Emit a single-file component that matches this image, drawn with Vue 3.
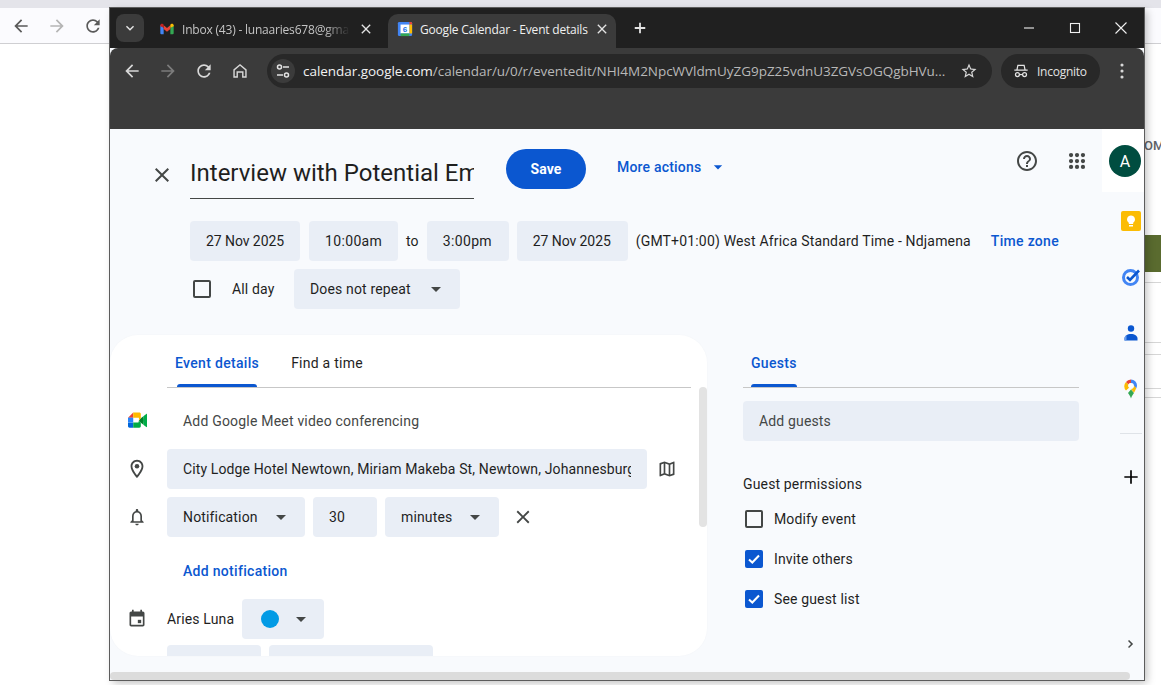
<script setup>
const toolIcons = {
  back: 'M20 11H7.830l5.590-5.590L12 4l-8 8 8 8 1.410-1.410L7.830 13H20v-2z',
  forward: 'M12 4l-1.410 1.410L16.170 11H4v2h12.170l-5.580 5.590L12 20l8-8z',
  refresh: 'M17.650 6.350C16.200 4.900 14.210 4 12 4c-4.420 0-7.990 3.580-7.990 8s3.570 8 7.990 8c3.730 0 6.840-2.550 7.730-6h-2.080c-.820 2.330-3.040 4-5.650 4-3.310 0-6-2.690-6-6s2.690-6 6-6c1.660 0 3.140.690 4.220 1.780L13 11h7V4l-2.350 2.350z',
  close: 'M19 6.410L17.590 5 12 10.590 6.410 5 5 6.410 10.590 12 5 17.590 6.410 19 12 13.410 17.590 19 19 17.590 13.410 12z',
  caret: 'M7 10l5 5 5-5z'
}
const permissions = [
  { label: 'Modify event', on: false },
  { label: 'Invite others', on: true },
  { label: 'See guest list', on: true }
]
const backLines = [47, 59, 11, 33, 8]
</script>

<template>
  <div class="desktop">
    <div class="back-top"></div>
    <div class="back-bar">
      <svg class="back-ico" viewBox="0 0 24 24"><path :d="toolIcons.back" /></svg>
      <svg class="back-ico dim" viewBox="0 0 24 24"><path :d="toolIcons.forward" /></svg>
      <svg class="back-ico" viewBox="0 0 24 24"><path :d="toolIcons.refresh" /></svg>
    </div>
    <div class="back-strip">
      <div class="back-om">OM</div>
      <div class="back-olive"></div>
      <div v-for="(m, i) in backLines" :key="i" class="back-line" :style="{ marginTop: m + 'px' }"></div>
    </div>

    <div class="window">
      <div class="tabstrip">
        <div class="tab-search">
          <svg viewBox="0 0 24 24" width="16" height="16"><path d="M7.400 8.600L12 13.200l4.600-4.600L18 10l-6 6-6-6z" fill="#e8e8e8" /></svg>
        </div>
        <div class="tab">
          <svg class="favicon" viewBox="0 0 24 24">
            <path d="M2 20V6l5 4v10H3.500A1.500 1.500 0 0 1 2 18.500z" fill="#4285f4" />
            <path d="M22 20V6l-5 4v10h3.500A1.500 1.500 0 0 0 22 18.500z" fill="#34a853" />
            <path d="M7 12V6.500L12 10.500l5-4V12l-5 4z" fill="#ea4335" />
            <path d="M2 8V6.500C2 4.500 4.300 3.400 5.900 4.600L7 5.500V10z" fill="#c5221f" />
            <path d="M22 8V6.500c0-2-2.300-3.100-3.900-1.900L17 5.500V10z" fill="#fbbc04" />
          </svg>
          <span class="tab-title fade">Inbox (43) - lunaaries678@gmail.com</span>
          <svg class="tab-x" viewBox="0 0 24 24"><path :d="toolIcons.close" /></svg>
        </div>
        <div class="tab active">
          <svg class="favicon" viewBox="0 0 18 18">
            <rect x="1" y="1" width="16" height="16" rx="1.500" fill="#4285f4" />
            <rect x="4" y="4" width="10" height="10" fill="#fff" />
            <path d="M14 1h1.500A1.500 1.500 0 0 1 17 2.500V4h-3z" fill="#ea4335" />
            <rect x="14" y="4" width="3" height="10" fill="#fbbc04" />
            <rect x="4" y="14" width="10" height="3" fill="#34a853" />
            <text x="9" y="12.300" text-anchor="middle" class="cal-num">6</text>
          </svg>
          <span class="tab-title on">Google Calendar - Event details</span>
          <svg class="tab-x" viewBox="0 0 24 24"><path :d="toolIcons.close" /></svg>
        </div>
        <svg class="new-tab" viewBox="0 0 24 24"><path d="M19 13.200h-5.800V19h-2.400v-5.800H5v-2.400h5.800V5h2.400v5.800H19z" /></svg>
        <div class="win-controls">
          <svg viewBox="0 0 14 14"><path d="M2 7h10" /></svg>
          <svg viewBox="0 0 14 14"><rect x="2.500" y="2.500" width="9" height="9" /></svg>
          <svg viewBox="0 0 14 14"><path d="M1.500 1.500l11 11M12.500 1.500l-11 11" /></svg>
        </div>
      </div>

      <div class="toolbar">
        <div class="nav">
          <svg class="nav-ico" viewBox="0 0 24 24"><path :d="toolIcons.back" /></svg>
          <svg class="nav-ico dim" viewBox="0 0 24 24"><path :d="toolIcons.forward" /></svg>
          <svg class="nav-ico" viewBox="0 0 24 24"><path :d="toolIcons.refresh" /></svg>
          <svg class="nav-ico" viewBox="0 0 24 24"><path d="M12 3.500L4 10.300V20h5.500v-6h5v6H20v-9.700zM18.300 18.300h-2.100v-6H7.800v6H5.700v-7.200L12 5.700l6.300 5.400z" /></svg>
        </div>
        <div class="omnibox">
          <div class="tune">
            <svg viewBox="0 0 16 16" width="16" height="16" fill="none" stroke="#e3e3e3" stroke-width="1.500">
              <circle cx="4.500" cy="4" r="2" /><path d="M8 4h6M2 12h6" /><circle cx="11.500" cy="12" r="2" />
            </svg>
          </div>
          <span class="url"><b>calendar.google.com</b>/calendar/u/0/r/eventedit/NHI4M2NpcWVldmUyZG9pZ25vdnU3ZGVsOGQgbHVu...</span>
          <svg class="star" viewBox="0 0 24 24"><path d="M22 9.240l-7.190-.620L12 2 9.190 8.630 2 9.240l5.460 4.730L5.820 21 12 17.270 18.180 21l-1.630-7.030L22 9.240zM12 15.400l-3.760 2.270 1-4.280-3.320-2.880 4.380-.380L12 6.100l1.710 4.040 4.380.380-3.320 2.880 1 4.280L12 15.400z" /></svg>
        </div>
        <div class="incognito">
          <svg viewBox="0 0 18 18" width="16" height="16" fill="none" stroke="#e3e3e3" stroke-width="1.400">
            <path d="M4.500 7.500L5.500 2.800h7l1 4.700M1.500 8h15" /><circle cx="5" cy="13" r="2.200" /><circle cx="13" cy="13" r="2.200" /><path d="M7.200 13h3.600" />
          </svg>
          <span>Incognito</span>
        </div>
        <svg class="more" viewBox="0 0 24 24"><circle cx="12" cy="5.500" r="1.700" /><circle cx="12" cy="12" r="1.700" /><circle cx="12" cy="18.500" r="1.700" /></svg>
      </div>

      <div class="main">
        <div class="page">
          <div class="head">
            <svg class="ico head-x" viewBox="0 0 24 24"><path :d="toolIcons.close" /></svg>
            <input class="title" value="Interview with Potential Employer" readonly />
            <div class="save">Save</div>
            <div class="more-actions">More actions
              <svg viewBox="0 0 24 24" width="20" height="20"><path :d="toolIcons.caret" fill="#0b57d0" /></svg>
            </div>
            <svg class="ico help" viewBox="0 0 24 24"><path d="M11 18h2v-2h-2v2zm1-16C6.480 2 2 6.480 2 12s4.480 10 10 10 10-4.480 10-10S17.520 2 12 2zm0 18c-4.410 0-8-3.590-8-8s3.590-8 8-8 8 3.590 8 8-3.590 8-8 8zm0-14c-2.210 0-4 1.790-4 4h2c0-1.100.9-2 2-2s2 .9 2 2c0 2-3 1.750-3 5h2c0-2.250 3-2.500 3-5 0-2.210-1.790-4-4-4z" /></svg>
            <svg class="ico apps" viewBox="0 0 24 24">
              <template v-for="y in [5, 12, 19]" :key="y">
                <circle v-for="x in [5, 12, 19]" :key="x" :cx="x" :cy="y" r="2.500" />
              </template>
            </svg>
          </div>

          <div class="dates">
            <div class="chip d">27 Nov 2025</div>
            <div class="chip t t1">10:00am</div>
            <span class="to">to</span>
            <div class="chip t t2">3:00pm</div>
            <div class="chip d d2">27 Nov 2025</div>
            <span class="tz">(GMT+01:00) West Africa Standard Time - Ndjamena</span>
            <span class="link tz-link">Time zone</span>
          </div>

          <div class="repeat">
            <span class="box"></span>
            <span class="allday">All day</span>
            <div class="chip drop rep">Does not repeat
              <svg class="caret" viewBox="0 0 24 24"><path :d="toolIcons.caret" /></svg>
            </div>
          </div>

          <div class="cols">
            <div class="card">
              <div class="tabs">
                <div class="gtab cur">Event details</div>
                <div class="gtab">Find a time</div>
              </div>
              <div class="rows">
                <div class="row">
                  <svg class="row-ico meet" viewBox="0 0 20 20">
                    <path d="M11.500 10l2 2.300 2.700 2.200.5-4.500-.5-4.500-2.700 2.200z" fill="#00832d" />
                    <path d="M0 14v4c0 .8.700 1.500 1.500 1.500H5.500V14z" fill="#0066da" transform="translate(0 -2)" />
                    <path d="M5.500 1.500L0 7h5.500z" fill="#e94235" />
                    <rect x="0" y="7" width="5.500" height="5" fill="#2684fc" />
                    <path d="M5.500 12v5.500h6.500c.8 0 1.500-.7 1.500-1.500v-3.700l-2-2.300-.5 2z" fill="#00ac47" />
                    <path d="M13.500 3c0-.8-.7-1.500-1.500-1.500H5.500V7h6v3l2-2.500z" fill="#ffba00" />
                    <path d="M16.200 5.500l3-2.400c.3-.2.800 0 .8.400v13c0 .4-.5.600-.8.400l-3-2.400z" fill="#00ac47" />
                  </svg>
                  <span class="meet-text">Add Google Meet video conferencing</span>
                </div>
                <div class="row">
                  <svg class="row-ico pin" viewBox="0 0 24 24"><path d="M12 2C8.130 2 5 5.130 5 9c0 5.250 7 13 7 13s7-7.750 7-13c0-3.870-3.130-7-7-7zM7 9c0-2.760 2.240-5 5-5s5 2.240 5 5c0 2.880-2.880 7.190-5 9.880C9.920 16.210 7 11.850 7 9z" /><circle cx="12" cy="9" r="2.500" /></svg>
                  <div class="chip loc"><input class="loc-input" value="City Lodge Hotel Newtown, Miriam Makeba St, Newtown, Johannesburg, South Africa" readonly /></div>
                  <svg class="map" viewBox="0 0 24 24"><path d="M20.500 3l-.160.030L15 5.100 9 3 3.360 4.900c-.210.070-.360.250-.360.480V20.500c0 .280.220.500.500.500l.160-.030L9 18.900l6 2.100 5.640-1.900c.210-.070.360-.250.360-.480V3.500c0-.280-.220-.500-.500-.500zM10 5.470l4 1.400v11.660l-4-1.400V5.470zm-5 .990l3-1.010v11.700l-3 1.160V6.460zm14 11.080l-3 1.010V6.860l3-1.160v11.840z" /></svg>
                </div>
                <div class="row">
                  <svg class="row-ico" viewBox="0 0 24 24"><path d="M12 22c1.100 0 2-.9 2-2h-4c0 1.100.9 2 2 2zm6-6v-5c0-3.070-1.630-5.640-4.500-6.320V4c0-.830-.670-1.500-1.500-1.500s-1.500.670-1.500 1.500v.680C7.640 5.360 6 7.920 6 11v5l-2 2v1h16v-1l-2-2zm-2 1H8v-6c0-2.480 1.510-4.500 4-4.500s4 2.020 4 4.500v6z" /></svg>
                  <div class="chip drop n1">Notification
                    <svg class="caret" viewBox="0 0 24 24"><path :d="toolIcons.caret" /></svg>
                  </div>
                  <div class="chip n2">30</div>
                  <div class="chip drop n3">minutes
                    <svg class="caret" viewBox="0 0 24 24"><path :d="toolIcons.caret" /></svg>
                  </div>
                  <svg class="ico n-x" viewBox="0 0 24 24"><path :d="toolIcons.close" /></svg>
                </div>
                <div class="row add-row"><span class="link">Add notification</span></div>
                <div class="row">
                  <svg class="row-ico" viewBox="0 0 24 24"><path d="M19 3h-1V1h-2v2H8V1H6v2H5c-1.110 0-2 .9-2 2v14c0 1.100.890 2 2 2h14c1.100 0 2-.9 2-2V5c0-1.100-.9-2-2-2zm0 16H5V9h14v10z" /><rect x="13" y="13" width="4" height="4" /></svg>
                  <span class="owner">Aries Luna</span>
                  <div class="chip color">
                    <span class="dot"></span>
                    <svg class="caret" viewBox="0 0 24 24"><path :d="toolIcons.caret" /></svg>
                  </div>
                </div>
                <div class="row next">
                  <div class="chip b1"></div>
                  <div class="chip b2"></div>
                </div>
              </div>
              <div class="vthumb"></div>
            </div>

            <div class="guests">
              <div class="tabs g">
                <div class="gtab cur g-cur">Guests</div>
              </div>
              <div class="chip add-guests">Add guests</div>
              <div class="perm-title">Guest permissions</div>
              <div v-for="p in permissions" :key="p.label" class="perm">
                <span v-if="p.on" class="box on">
                  <svg viewBox="0 0 18 18" width="18" height="18"><path d="M4 9.500l3.300 3L14 5.500" fill="none" stroke="#fff" stroke-width="2" /></svg>
                </span>
                <span v-else class="box"></span>
                <span>{{ p.label }}</span>
              </div>
            </div>
          </div>
        </div>

        <div class="side">
          <div class="side-top"><div class="avatar">A</div></div>
          <div class="rail">
            <svg class="rail-ico" viewBox="0 0 20 20">
              <rect width="20" height="20" rx="2" fill="#fbbc04" />
              <path d="M10 4.500a4 4 0 0 0-2.200 7.300V13h4.400v-1.200A4 4 0 0 0 10 4.500z" fill="#fff" />
              <rect x="8" y="14" width="4" height="1.500" fill="#fff" />
            </svg>
            <svg class="rail-ico" viewBox="0 0 20 20">
              <circle cx="9.500" cy="10.500" r="7" fill="none" stroke="#4285f4" stroke-width="3" />
              <path d="M6 10l3 3L18 3.500" fill="none" stroke="#0b57d0" stroke-width="2.600" />
            </svg>
            <svg class="rail-ico" viewBox="0 0 20 20">
              <circle cx="10" cy="5.500" r="3.200" fill="#0b57d0" />
              <path d="M3.500 17.500v-2C3.500 12.800 6.300 11 10 11s6.500 1.800 6.500 4.500v2z" fill="#0b57d0" />
              <path d="M3.500 17.500v-2C3.500 14 4.300 13 5.500 12.300v5.200z" fill="#6d9eeb" />
            </svg>
            <svg class="rail-ico" viewBox="0 0 20 20">
              <path d="M10 19.500c-.8-2.600-1.800-3.800-3-5.500L10 10.500l3 3.500c-1.200 1.700-2.200 2.900-3 5.500z" fill="#34a853" />
              <path d="M10 .5a6 6 0 0 1 6 6c0 1.100-.4 2.100-.9 3L13 7a3 3 0 0 0-3-3z" fill="#4285f4" />
              <path d="M5 3l2.300 2.300a3 3 0 0 0 .7 3.500L5 11.500A6 6 0 0 1 5 3z" fill="#fbbc04" />
              <path d="M5 3A6 6 0 0 1 10 .5V4a3 3 0 0 0-2.700 1.300z" fill="#ea4335" />
              <path d="M13 6.500l2.200 2.800c-.6 1.700-1.400 3-2.200 4.500L10 10a3 3 0 0 0 3-3.500z" fill="#fbbc04" />
              <circle cx="10" cy="6.500" r="2.300" fill="#fff" />
            </svg>
            <div class="rail-div"></div>
            <svg class="rail-plus" viewBox="0 0 24 24"><path d="M20 13h-7v7h-2v-7H4v-2h7V4h2v7h7z" /></svg>
            <svg class="rail-chev" viewBox="0 0 24 24"><path d="M9.400 6.600L8 8l4 4-4 4 1.400 1.400 5.400-5.400z" /></svg>
          </div>
        </div>
      </div>
      <div class="hscroll"><div class="hthumb"></div></div>
    </div>
  </div>
</template>

<style scoped>
.desktop { position: relative; width: 1161px; height: 685px; overflow: hidden; background: #fff; font-family: Roboto, sans-serif; font-size: 14px; color: #1f1f1f; letter-spacing: .15px; }
.back-top { height: 8px; background: #e4e4ea; }
.back-bar { height: 35px; background: #fbfbfe; border-bottom: 1px solid #cfcfd2; display: flex; align-items: center; gap: 16px; padding-left: 11px; }
.back-ico { width: 20px; height: 20px; fill: #5a5a5a; }
.back-ico.dim { fill: #b5b5b5; }
.back-strip { position: absolute; left: 1145px; top: 136px; width: 16px; overflow: hidden; }
.back-om { height: 20px; font-size: 13px; font-weight: 500; color: #5f6368; line-height: 20px; white-space: nowrap; letter-spacing: 0; margin-left: -1px; width: 17px; overflow: hidden; }
.back-olive { margin-top: 79px; height: 37px; background: #5a6b2f; }
.back-line { height: 1px; background: #d6d6d6; }
.back-line:nth-child(3) { margin-top: 10px !important; }

.window { position: absolute; left: 110px; top: 8px; width: 1034px; height: 672px; display: flex; flex-direction: column; background: #f8fafd; box-shadow: 0 0 0 1px #5c5c5c, 3px 3px 8px rgba(0,0,0,.25); overflow: hidden; }
.tabstrip { height: 40px; flex: none; background: #202020; display: flex; align-items: flex-end; padding-left: 6px; font-family: "Open Sans", sans-serif; font-size: 12px; letter-spacing: -.2px; }
.tab-search { width: 28px; height: 28px; margin-bottom: 6px; border-radius: 8px; background: #3b3b3b; display: flex; align-items: center; justify-content: center; }
.tab { width: 240px; height: 34px; display: flex; align-items: center; padding: 0 14px 4px 11px; margin-left: 4px; box-sizing: border-box; color: #c4c4c4; }
.tab.active { width: 228px; margin-left: 0; background: #3b3b3b; border-radius: 10px 10px 0 0; padding: 0 6px 4px 9px; color: #f0f0f0; }
.favicon { width: 16px; height: 16px; flex: none; }
.cal-num { font: 700 9px "Liberation Sans", sans-serif; fill: #1a73e8; letter-spacing: 0; }
.tab-title { margin-left: 7px; flex: 1; overflow: hidden; white-space: nowrap; min-width: 0; }
.tab-title.fade { -webkit-mask-image: linear-gradient(90deg, #000 85%, transparent 100%); mask-image: linear-gradient(90deg, #000 85%, transparent 100%); margin-right: 8px; }
.tab-x { width: 16px; height: 16px; fill: #e3e3e3; flex: none; }
.new-tab { width: 18px; height: 18px; fill: #e3e3e3; margin: 0 0 11px 15px; }
.win-controls { margin-left: auto; width: 138px; height: 40px; display: flex; align-items: center; justify-content: space-between; padding: 0 16px; box-sizing: border-box; margin-right: 0; }
.win-controls svg { width: 14px; height: 14px; fill: none; stroke: #f0f0f0; stroke-width: 1.100; }

.toolbar { height: 81px; flex: none; box-sizing: border-box; padding: 6px 0 0 0; background: #3b3b3b; border-radius: 8px 8px 0 0; display: flex; align-items: flex-start; }
.nav { display: flex; width: 157px; padding: 7px 0 0 12px; gap: 16px; box-sizing: border-box; }
.nav-ico { width: 20px; height: 20px; fill: #d8d8d8; }
.nav-ico.dim { fill: #7c7c7c; }
.omnibox { width: 725px; height: 34px; border-radius: 17px; background: #282828; display: flex; align-items: center; padding: 0 14px 0 4px; box-sizing: border-box; margin-right: 9px; }
.tune { width: 24px; height: 24px; border-radius: 50%; background: #3b3b3b; display: flex; align-items: center; justify-content: center; flex: none; }
.url { margin-left: 8px; flex: 1; font-family: "Open Sans", sans-serif; font-size: 13.500px; letter-spacing: -.04px; color: #b8b8b8; white-space: nowrap; overflow: hidden; }
.url b { font-weight: 400; color: #f2f2f2; }
.star { width: 18px; height: 18px; fill: #d8d8d8; flex: none; margin-left: 10px; }
.incognito { width: 99px; height: 34px; border-radius: 17px; background: #282828; display: flex; align-items: center; padding-left: 12px; gap: 8px; box-sizing: border-box; font-family: "Open Sans", sans-serif; font-size: 12px; letter-spacing: -.25px; color: #e3e3e3; }
.more { width: 22px; height: 22px; margin: 6px 0 0 11px; fill: #d8d8d8; }

.main { flex: 1; min-height: 0; display: flex; overflow: hidden; }
.page { width: 992px; flex: none; padding-top: 20px; box-sizing: border-box; }
.ico { width: 24px; height: 24px; fill: #444746; flex: none; }
.head { display: flex; align-items: flex-start; height: 50px; padding-right: 13px; }
.head-x { margin: 14px 0 0 40px; }
.title { width: 284px; margin-left: 16px; height: 50px; border: none; border-bottom: 1px solid #444746; box-sizing: border-box; padding: 0 0 2px; background: transparent; outline: none; font: 400 24px Roboto, sans-serif; letter-spacing: 0; color: #1f1f1f; }
.save { margin-left: 32px; width: 80px; height: 40px; border-radius: 20px; background: #0b57d0; color: #fff; font-weight: 700; font-size: 14px; display: flex; align-items: center; justify-content: center; letter-spacing: .1px; }
.more-actions { margin-left: 31px; height: 36px; display: flex; align-items: center; gap: 7px; color: #0b57d0; font-weight: 500; letter-spacing: .2px; }
.help { margin-left: auto; margin-top: 0; }
.apps { margin-left: 26px; width: 24px; height: 24px; transform: scale(.85); }
.chip { height: 40px; padding: 0 16px; border-radius: 4px; background: #e9eef6; display: flex; align-items: center; box-sizing: border-box; color: #1f1f1f; white-space: nowrap; flex: none; }
.dates { display: flex; align-items: center; margin: 22px 0 0 80px; gap: 8px; }
.chip.d { letter-spacing: -.07px; width: 110px; }
.chip.t { letter-spacing: .35px; }
.dates .t1 { margin-left: 1px; width: 89px; }
.dates .t2 { width: 82px; }
.chip.d2 { width: 111px; }
.to { margin: 0; }
.tz { letter-spacing: .17px; }
.tz-link { margin-left: 12px; }
.link { color: #0b57d0; font-weight: 500; letter-spacing: .3px; }
.repeat { display: flex; align-items: center; margin: 8px 0 0 83px; }
.box { width: 18px; height: 18px; border: 2px solid #444746; border-radius: 2px; box-sizing: border-box; flex: none; display: block; }
.box.on { border: none; background: #0b57d0; }
.allday { margin-left: 21px; margin-right: 20px; width: 42px; flex: none; white-space: nowrap; }
.drop { padding-right: 12px; justify-content: space-between; }
.rep { width: 166px; }
.caret { width: 24px; height: 24px; fill: #444746; margin-left: 12px; flex: none; }
.drop .caret { margin-left: 0; }
.cols { display: flex; margin-top: 26px; align-items: flex-start; }
.card { position: relative; width: 597px; height: 321px; flex: none; border-radius: 28px; background: #fff; overflow: hidden; box-shadow: 0 0 2px rgba(0,0,0,.03); }
.tabs { height: 53px; margin: 0 16px 0 57px; border-bottom: 1px solid #c7c7c7; box-sizing: border-box; display: flex; gap: 32px; padding-left: 8px; align-items: flex-start; }
.tabs.g { margin: 0; }
.gtab { position: relative; height: 52px; line-height: 56px; color: #1f1f1f; letter-spacing: .25px; }
.gtab.cur { color: #0b57d0; font-weight: 500; letter-spacing: .32px; }
.gtab.cur::after { content: ""; position: absolute; left: 2px; right: 2px; bottom: 0; height: 3px; border-radius: 3px 3px 0 0; background: #0b57d0; }
.g-cur::after { left: 0 !important; right: 0 !important; }
.rows { margin-top: 13px; display: flex; flex-direction: column; gap: 8px; }
.row { display: flex; align-items: center; height: 40px; flex: none; padding-left: 57px; position: relative; }
.row-ico { position: absolute; left: 17px; top: 10px; width: 20px; height: 20px; fill: #444746; }
.row-ico.pin { left: 16px; top: 9px; width: 22px; height: 22px; }
.row-ico.meet { left: 18px; width: 19px; height: 19px; top: 10px; }
.meet-text { margin-left: 16px; color: #444746; letter-spacing: .2px; }
.loc { width: 480px; }
.loc-input { width: 100%; border: none; background: transparent; padding: 0; outline: none; font: 400 14px Roboto, sans-serif; letter-spacing: .12px; color: #1f1f1f; }
.map { width: 20px; height: 20px; fill: #444746; margin-left: 10px; }
.n1 { width: 138px; }
.n2 { width: 64px; margin-left: 8px; }
.n3 { width: 114px; margin-left: 8px; }
.n-x { margin-left: 13px; width: 22px; height: 22px; }
.add-row { margin-top: 6px; padding-left: 73px; }
.owner { width: 75px; flex: none; }
.color { width: 82px; padding: 0 11px 0 19px; justify-content: space-between; }
.color .caret { margin-left: 0; }
.dot { width: 18px; height: 18px; border-radius: 50%; background: #039be5; }
.next { margin-top: -2px; gap: 8px; }
.b1 { width: 94px; }
.b2 { width: 164px; }
.vthumb { position: absolute; right: 0; top: 52px; width: 8px; height: 140px; border-radius: 4px; background: #e3e3e3; }
.guests { margin-left: 36px; width: 336px; flex: none; }
.add-guests { margin-top: 13px; color: #444746; }
.perm-title { margin-top: 33px; height: 20px; line-height: 20px; color: #1f1f1f; margin-bottom: 5px; }
.perm { height: 40px; display: flex; align-items: center; padding-left: 2px; gap: 11px; }
.side { width: 42px; flex: none; display: flex; flex-direction: column; }
.side-top { height: 63px; background: #fff; box-sizing: border-box; padding: 16px 0 0 7px; flex: none; }
.avatar { width: 32px; height: 32px; border-radius: 50%; background: #004d40; color: #fff; font-size: 16px; display: flex; align-items: center; justify-content: center; letter-spacing: 0; }
.rail { flex: 1; width: 22px; margin-left: 18px; display: flex; flex-direction: column; align-items: center; padding: 19px 0 19px; box-sizing: border-box; }
.rail-ico { width: 20px; height: 20px; flex: none; margin-bottom: 36px; }
.rail-div { width: 22px; height: 1px; background: #dfe3e8; margin-top: -2px; flex: none; }
.rail-plus { width: 20px; height: 20px; margin-top: 33px; fill: #000; flex: none; }
.rail-chev { width: 18px; height: 18px; margin-top: auto; fill: #444746; flex: none; }
.hscroll { height: 8px; flex: none; background: #f8fafd; }
.hthumb { width: 1020px; height: 8px; border-radius: 4px; background: #dcdcdc; }
</style>
